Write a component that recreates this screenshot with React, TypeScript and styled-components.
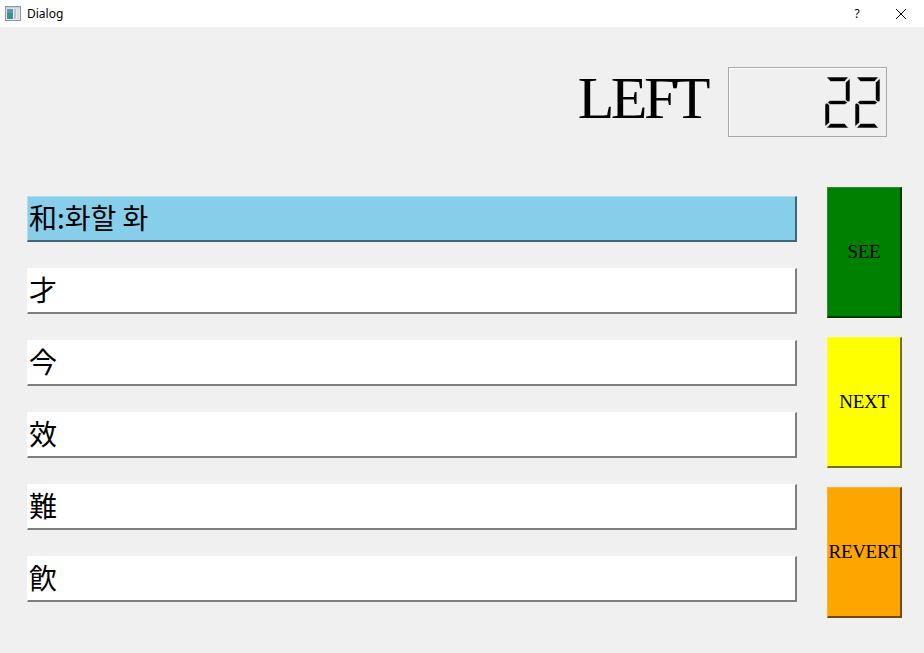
import React from "react";
import styled, { createGlobalStyle } from "styled-components";

const Global = createGlobalStyle`
  html, body { margin: 0; padding: 0; background: #f0f0f0; }
  body { width: 924px; height: 653px; overflow: hidden; font-family: "Liberation Serif", serif; }
`;

const Window = styled.div`
  width: 924px;
  height: 653px;
  display: flex;
  flex-direction: column;
  background: #f0f0f0;
`;

const TitleBar = styled.div`
  height: 27px;
  background: #ffffff;
  display: flex;
  align-items: center;
  padding-left: 5px;
  font-family: "Noto Sans", "Open Sans", sans-serif;
  font-size: 12px;
  color: #000;
`;

const TitleText = styled.span`
  margin-left: 6px;
  flex: 1;
  line-height: 1;
`;

const TitleButton = styled.div<{ $w: number }>`
  width: ${(p) => p.$w}px;
  height: 27px;
  display: flex;
  align-items: center;
  justify-content: center;
  font-size: 12px;
`;

const Content = styled.div`
  flex: 1;
  display: flex;
  flex-direction: column;
  padding: 40px 22px 0 27px;
`;

const Header = styled.div`
  display: flex;
  justify-content: flex-end;
  align-items: center;
  gap: 21px;
  padding-right: 15px;
  height: 70px;
`;

const LeftLabel = styled.div`
  font-family: "Liberation Serif", serif;
  font-size: 60px;
  letter-spacing: -3.5px;
  line-height: 1;
  color: #000;
  padding-bottom: 9px;
`;

const Lcd = styled.div`
  width: 159px;
  height: 70px;
  box-sizing: border-box;
  border: 1px solid #a8a8a8;
  box-shadow: inset 1px 1px 0 #ffffff;
  display: flex;
  justify-content: flex-end;
  align-items: center;
  gap: 5px;
  padding-right: 6px;
`;

const Main = styled.div`
  display: flex;
  gap: 30px;
  margin-top: 50px;
`;

const Rows = styled.div`
  flex: 1;
  display: flex;
  flex-direction: column;
  gap: 26px;
  padding-top: 9px;
`;

const Row = styled.div<{ $bg: string }>`
  height: 46px;
  box-sizing: border-box;
  background: ${(p) => p.$bg};
  border-top: 1px solid rgba(255, 255, 255, 0.35);
  border-left: 1px solid rgba(255, 255, 255, 0.35);
  border-right: 2px solid rgba(0, 0, 0, 0.5);
  border-bottom: 2px solid rgba(0, 0, 0, 0.5);
  display: flex;
  align-items: center;
  padding-left: 1px;
  padding-bottom: 3px;
  font-family: "Noto Sans CJK KR", "Noto Sans CJK SC", sans-serif;
  font-size: 28px;
  color: #000;
  line-height: 1;
`;

const Buttons = styled.div`
  width: 75px;
  display: flex;
  flex-direction: column;
  gap: 19px;
`;

const ActionButton = styled.div<{ $bg: string }>`
  height: 131px;
  box-sizing: border-box;
  background: ${(p) => p.$bg};
  border-top: 1px solid rgba(255, 255, 255, 0.15);
  border-left: 1px solid rgba(255, 255, 255, 0.15);
  border-right: 2px solid rgba(0, 0, 0, 0.55);
  border-bottom: 2px solid rgba(0, 0, 0, 0.55);
  display: flex;
  align-items: center;
  justify-content: center;
  font-family: "Liberation Serif", serif;
  font-size: 19px;
  color: #000;
  white-space: nowrap;
  letter-spacing: -0.3px;
`;

const SEGS: Record<string, string> = {
  a: "1.5,0 23.5,0 19.5,4.5 5.5,4.5",
  b: "25,1.5 25,24 23,25 20.5,23 20.5,5.5",
  c: "25,27 25,49.5 20.5,45.5 20.5,28 23,26",
  d: "5.5,46.5 19.5,46.5 23.5,51 1.5,51",
  e: "0,27 2,26 4.5,28 4.5,45.5 0,49.5",
  f: "0,1.5 4.5,5.5 4.5,23 2,25 0,24",
  g: "2.5,25.5 5,23.5 20,23.5 22.5,25.5 20,27.5 5,27.5",
};

const DIGITS: Record<string, string> = {
  "2": "abged",
};

const Digit = ({ d }: { d: string }) => (
  <svg width="25" height="51" viewBox="0 0 25 51">
    {DIGITS[d].split("").map((s) => (
      <polygon key={s} points={SEGS[s]} fill="#000" stroke="#f0f0f0" strokeWidth="0.6" />
    ))}
  </svg>
);

const AppIcon = () => (
  <svg width="16" height="15" viewBox="0 0 16 15">
    <rect x="0.5" y="0.5" width="15" height="14" fill="#e8ecef" stroke="#8a96a0" />
    <rect x="2" y="3" width="6" height="10" fill="#3f8f86" />
    <rect x="2" y="3" width="6" height="4" fill="#5a9ab8" />
    <rect x="9" y="3" width="2" height="10" fill="#b9c4cc" />
    <rect x="12" y="3" width="2" height="10" fill="#d4dbe0" />
    <rect x="1" y="1" width="14" height="1.5" fill="#c8d0d6" />
  </svg>
);

const CloseIcon = () => (
  <svg width="12" height="12" viewBox="0 0 12 12">
    <path d="M1 1 L11 11 M11 1 L1 11" stroke="#000" strokeWidth="1" />
  </svg>
);

const rows = [
  { text: "和:화할 화", bg: "#87ceeb" },
  { text: "才", bg: "#ffffff" },
  { text: "今", bg: "#ffffff" },
  { text: "效", bg: "#ffffff" },
  { text: "難", bg: "#ffffff" },
  { text: "飮", bg: "#ffffff" },
];

const buttons = [
  { label: "SEE", bg: "#008000" },
  { label: "NEXT", bg: "#ffff00" },
  { label: "REVERT", bg: "#ffa500" },
];

export default function App() {
  return (
    <>
      <Global />
      <Window>
        <TitleBar>
          <AppIcon />
          <TitleText>Dialog</TitleText>
          <TitleButton $w={42}>?</TitleButton>
          <TitleButton $w={46}>
            <CloseIcon />
          </TitleButton>
        </TitleBar>
        <Content>
          <Header>
            <LeftLabel>LEFT</LeftLabel>
            <Lcd>
              <Digit d="2" />
              <Digit d="2" />
            </Lcd>
          </Header>
          <Main>
            <Rows>
              {rows.map((r, i) => (
                <Row key={i} $bg={r.bg}>
                  {r.text}
                </Row>
              ))}
            </Rows>
            <Buttons>
              {buttons.map((b) => (
                <ActionButton key={b.label} $bg={b.bg}>
                  {b.label}
                </ActionButton>
              ))}
            </Buttons>
          </Main>
        </Content>
      </Window>
    </>
  );
}
